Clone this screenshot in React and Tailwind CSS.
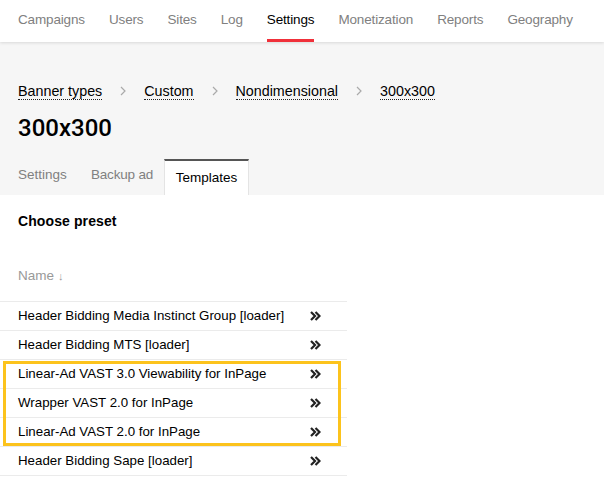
import React from "react";

const F = { fontFamily: '"Liberation Sans", Arial, sans-serif' };

function Dbl() {
  return (
    <svg width="11" height="10" viewBox="0 0 11 10" className="block">
      <path d="M1 1 L5 5 L1 9" fill="none" stroke="#222" strokeWidth="2.2" />
      <path d="M5.5 1 L9.5 5 L5.5 9" fill="none" stroke="#222" strokeWidth="2.2" />
    </svg>
  );
}

function Sep() {
  return (
    <svg width="6" height="10" viewBox="0 0 6 10" className="block">
      <path d="M1 1 L5 5 L1 9" fill="none" stroke="#aaa" strokeWidth="1.2" />
    </svg>
  );
}

const nav = ["Campaigns", "Users", "Sites", "Log", "Settings", "Monetization", "Reports", "Geography"];
const rows = [
  "Header Bidding Media Instinct Group [loader]",
  "Header Bidding MTS [loader]",
  "Linear-Ad VAST 3.0 Viewability for InPage",
  "Wrapper VAST 2.0 for InPage",
  "Linear-Ad VAST 2.0 for InPage",
  "Header Bidding Sape [loader]",
];
const crumbs = ["Banner types", "Custom", "Nondimensional", "300x300"];

export default function App() {
  return (
    <div className="w-[604px] h-[477px] bg-white overflow-hidden text-[#222]" style={F}>
      <div className="relative z-10 h-[42px] bg-white shadow-[0_1px_3px_rgba(0,0,0,0.12)] flex pl-[18px] gap-[24px] text-[13.5px] tracking-[-0.15px]">
        {nav.map((n) => (
          <div
            key={n}
            className={
              "h-full flex items-center border-b-[3px] pt-[2px] " +
              (n === "Settings" ? "border-[#f0303a] text-black" : "border-transparent text-[#808080]")
            }
          >
            {n}
          </div>
        ))}
      </div>
      <div className="bg-[#f6f6f6] h-[153px] pl-[18px] flex flex-col">
        <div className="flex items-center mt-[38px] h-[22px] text-[14.3px]">
          {crumbs.map((c, i) => (
            <React.Fragment key={c}>
              <span className="border-b border-dotted border-[#222] leading-[16px] text-black">{c}</span>
              {i < crumbs.length - 1 && (
                <span className="mx-[18px]">
                  <Sep />
                </span>
              )}
            </React.Fragment>
          ))}
        </div>
        <div className="mt-[9px] text-[24px] leading-[34px] text-black" style={{ fontFamily: 'Roboto, "Liberation Sans", sans-serif', fontWeight: 500 }}>
          300x300
        </div>
        <div className="flex mt-auto h-[36px] text-[13.5px] -ml-[18px]">
          <div className="w-[91px] pl-[18px] flex items-center text-[#808080] pb-[4px]">Settings</div>
          <div className="w-[73px] flex items-center text-[#808080] pb-[4px] tracking-[-0.2px]">Backup ad</div>
          <div className="w-[85px] justify-center bg-white border-t-2 border-[#555] border-x border-x-[#e4e4e4] flex items-center text-black">
            Templates
          </div>
        </div>
      </div>
      <div className="pl-[18px] pt-[16px] text-[14px] font-bold text-black tracking-[0.1px]">Choose preset</div>
      <div className="pl-[18px] mt-[34px] text-[13.5px] text-[#999] flex items-center gap-[4px]">
        Name <span className="text-[11px]">↓</span>
      </div>
      <div className="relative mt-[15px] w-[347px] border-t border-[#ebebeb]">
        {rows.map((r) => (
          <div key={r} className="h-[29px] border-b border-[#ebebeb] flex items-center pl-[18px] pr-[26px] text-[13.3px] text-black">
            <span className="flex-1">{r}</span>
            <Dbl />
          </div>
        ))}
        <div className="absolute left-[3px] top-[59px] w-[338px] h-[85px] border-[3px] border-[#fcc31c]" />
      </div>
    </div>
  );
}
